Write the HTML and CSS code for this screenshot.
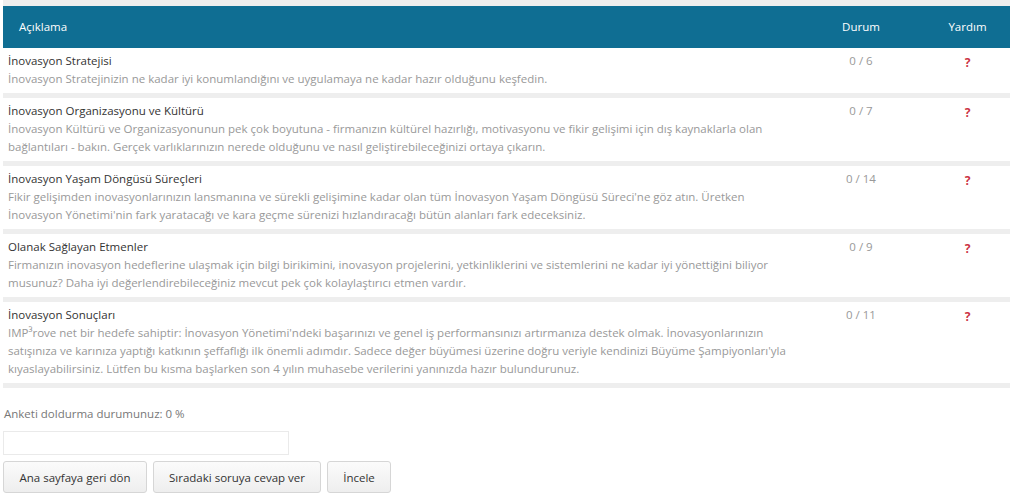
FILE: index.html
```html
<!DOCTYPE html>
<html lang="tr">
<head>
<meta charset="utf-8">
<link rel="stylesheet" href="styles.css">
</head>
<body>
<div class="page">
  <table class="survey">
    <colgroup>
      <col class="col-desc">
      <col class="col-status">
      <col class="col-help">
    </colgroup>
    <thead>
      <tr>
        <th class="h-desc">Açıklama</th>
        <th class="h-center">Durum</th>
        <th class="h-center h-help">Yardım</th>
      </tr>
    </thead>
    <tbody>
      <tr>
        <td class="desc">
          <div class="title">İnovasyon Stratejisi</div>
          <div class="text">İnovasyon Stratejinizin ne kadar iyi konumlandığını ve uygulamaya ne kadar hazır olduğunu keşfedin.</div>
        </td>
        <td class="status">0 / 6</td>
        <td class="help"><span class="q">?</span></td>
      </tr>
      <tr>
        <td class="desc">
          <div class="title">İnovasyon Organizasyonu ve Kültürü</div>
          <div class="text">İnovasyon Kültürü ve Organizasyonunun pek çok boyutuna - firmanızın kültürel hazırlığı, motivasyonu ve fikir gelişimi için dış kaynaklarla olan bağlantıları - bakın. Gerçek varlıklarınızın nerede olduğunu ve nasıl geliştirebileceğinizi ortaya çıkarın.</div>
        </td>
        <td class="status">0 / 7</td>
        <td class="help"><span class="q">?</span></td>
      </tr>
      <tr>
        <td class="desc">
          <div class="title">İnovasyon Yaşam Döngüsü Süreçleri</div>
          <div class="text">Fikir gelişimden inovasyonlarınızın lansmanına ve sürekli gelişimine kadar olan tüm İnovasyon Yaşam Döngüsü Süreci'ne göz atın. Üretken İnovasyon Yönetimi'nin fark yaratacağı ve kara geçme sürenizi hızlandıracağı bütün alanları fark edeceksiniz.</div>
        </td>
        <td class="status">0 / 14</td>
        <td class="help"><span class="q">?</span></td>
      </tr>
      <tr>
        <td class="desc">
          <div class="title">Olanak Sağlayan Etmenler</div>
          <div class="text">Firmanızın inovasyon hedeflerine ulaşmak için bilgi birikimini, inovasyon projelerini, yetkinliklerini ve sistemlerini ne kadar iyi yönettiğini biliyor musunuz? Daha iyi değerlendirebileceğiniz mevcut pek çok kolaylaştırıcı etmen vardır.</div>
        </td>
        <td class="status">0 / 9</td>
        <td class="help"><span class="q">?</span></td>
      </tr>
      <tr>
        <td class="desc">
          <div class="title">İnovasyon Sonuçları</div>
          <div class="text">IMP³rove net bir hedefe sahiptir: İnovasyon Yönetimi'ndeki başarınızı ve genel iş performansınızı artırmanıza destek olmak. İnovasyonlarınızın satışınıza ve karınıza yaptığı katkının şeffaflığı ilk önemli adımdır. Sadece değer büyümesi üzerine doğru veriyle kendinizi Büyüme Şampiyonları'yla kıyaslayabilirsiniz. Lütfen bu kısma başlarken son 4 yılın muhasebe verilerini yanınızda hazır bulundurunuz.</div>
        </td>
        <td class="status">0 / 11</td>
        <td class="help"><span class="q">?</span></td>
      </tr>
    </tbody>
  </table>

  <p class="progress-label">Anketi doldurma durumunuz: 0 %</p>
  <div class="progress-box"></div>
  <div class="actions">
    <button class="btn btn-home">Ana sayfaya geri dön</button>
    <button class="btn btn-next">Sıradaki soruya cevap ver</button>
    <button class="btn btn-review">İncele</button>
  </div>
</div>
</body>
</html>
```

FILE: styles.css
```css
html, body {
  margin: 0;
  padding: 0;
  background: #ffffff;
}

body {
  font-family: "Open Sans", "DejaVu Sans", sans-serif;
  font-size: 11.5px;
  line-height: 18px;
  color: #333333;
}

.page {
  padding: 0 0 0 3px;
}

.survey {
  width: 1007px;
  border-collapse: collapse;
  table-layout: fixed;
  border-top: 6px solid #eeeeee;
}

.col-desc { width: 798px; }
.col-status { width: 120px; }
.col-help { width: 89px; }

.survey thead th {
  background: #0f6e93;
  color: #ffffff;
  font-weight: 400;
  font-size: 11.5px;
  height: 42px;
  padding: 0;
  vertical-align: middle;
}

.h-desc {
  text-align: left;
  padding-left: 16px !important;
}

.h-center {
  text-align: center;
}

.h-help {
  padding-left: 4px !important;
}

.survey tbody td {
  border-bottom: 5px solid #eeeeee;
  padding: 4px 5px 5px 5px;
  vertical-align: top;
}

.desc .title {
  color: #333333;
}

.desc .text {
  color: #999999;
}

.status {
  text-align: center;
  color: #999999;
}

.help {
  text-align: center;
  padding-left: 9px !important;
}

.q {
  display: inline-block;
  color: #cc3344;
  font-weight: 700;
  font-size: 12px;
  margin-top: 2px;
}

.progress-label {
  margin: 17px 0 0 1px;
  color: #777777;
  line-height: 18px;
}

.progress-box {
  width: 284px;
  height: 22px;
  border: 1px solid #eaeaea;
  margin-top: 8px;
}

.actions {
  display: flex;
  gap: 6px;
  margin-top: 6px;
}

.btn {
  font-family: "Open Sans", "DejaVu Sans", sans-serif;
  font-size: 11.5px;
  color: #333333;
  height: 32px;
  padding: 0;
  white-space: nowrap;
  background: linear-gradient(#fbfbfb, #eeeeee);
  border: 1px solid #d6d6d6;
  border-radius: 3px;
}

.btn-home { width: 144px; }
.btn-next { width: 168px; }
.btn-review { width: 64px; }
```
